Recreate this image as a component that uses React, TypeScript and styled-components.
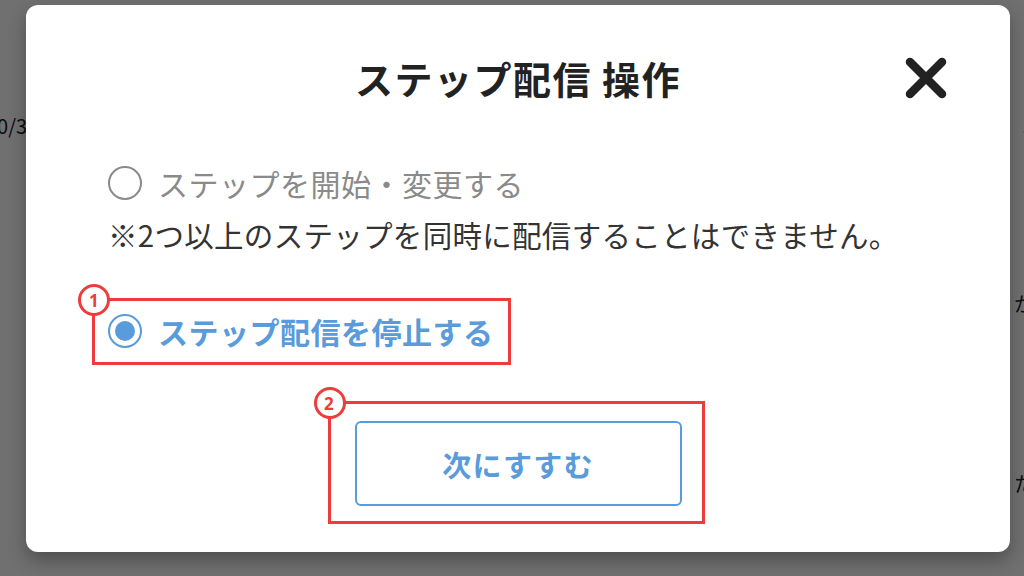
import React from "react";
import styled, { createGlobalStyle } from "styled-components";

const GlobalStyle = createGlobalStyle`
  html, body {
    margin: 0;
    padding: 0;
    width: 1024px;
    height: 576px;
    overflow: hidden;
    font-family: "Noto Sans CJK JP", "Noto Sans", sans-serif;
  }
`;

const Page = styled.div`
  position: relative;
  width: 1024px;
  height: 576px;
  background: #fff;
  display: flex;
  justify-content: space-between;
  overflow: hidden;
`;

const SideColumn = styled.div<{ align: "left" | "right" }>`
  display: flex;
  flex-direction: column;
  align-items: ${p => (p.align === "left" ? "flex-start" : "flex-end")};
  font-size: 20px;
  line-height: 28px;
  color: #222;
  padding-top: 112px;
  margin-left: ${p => (p.align === "left" ? "-14px" : "0")};
  margin-right: ${p => (p.align === "right" ? "-10px" : "0")};
`;

const SideText = styled.span<{ space?: number }>`
  margin-top: ${p => p.space ?? 0}px;
`;

const Overlay = styled.div`
  position: absolute;
  inset: 0;
  background: rgba(0, 0, 0, 0.56);
  display: flex;
  padding: 5px 14px 24px 26px;
  box-sizing: border-box;
`;

const Modal = styled.div`
  flex: 1;
  background: #fff;
  border-radius: 12px;
  box-shadow: 0 8px 18px rgba(0, 0, 0, 0.3);
  padding: 49px 62px 0 82px;
  display: flex;
  flex-direction: column;
`;

const Header = styled.div`
  display: grid;
  grid-template-columns: 1fr auto 1fr;
  align-items: center;
  height: 48px;
  margin-left: -20px;
`;

const Title = styled.h2`
  grid-column: 2;
  margin: 0;
  font-size: 38px;
  font-weight: 700;
  letter-spacing: 1.5px;
  color: #222;
  line-height: 48px;
`;

const CloseButton = styled.button`
  grid-column: 3;
  justify-self: end;
  width: 44px;
  height: 44px;
  padding: 0;
  border: none;
  background: none;
  display: flex;
  align-items: center;
  justify-content: center;
  cursor: pointer;
`;

const Option = styled.label<{ selected?: boolean; space: number }>`
  position: relative;
  display: inline-flex;
  align-self: flex-start;
  align-items: center;
  gap: 16px;
  height: 44px;
  margin-top: ${p => p.space}px;
  font-size: 30px;
  font-weight: ${p => (p.selected ? 700 : 400)};
  color: ${p => (p.selected ? "#5a9bdb" : "#8a8a8a")};
  letter-spacing: 0.5px;
`;

const Radio = styled.span<{ selected?: boolean }>`
  width: 34px;
  height: 34px;
  box-sizing: border-box;
  border-radius: 50%;
  border: 2px solid ${p => (p.selected ? "#5a9bdb" : "#8a8a8a")};
  display: flex;
  align-items: center;
  justify-content: center;
  flex-shrink: 0;

  &::after {
    content: "";
    display: ${p => (p.selected ? "block" : "none")};
    width: 20px;
    height: 20px;
    border-radius: 50%;
    background: #5a9bdb;
  }
`;

const Note = styled.p`
  margin: 7px 0 0;
  font-size: 29.5px;
  line-height: 44px;
  letter-spacing: 0.3px;
  color: #333;
`;

const Highlight = styled.span<{ t: number; r: number; b: number; l: number }>`
  position: absolute;
  top: ${p => p.t}px;
  right: ${p => p.r}px;
  bottom: ${p => p.b}px;
  left: ${p => p.l}px;
  border: 3px solid #ee3b3b;
  pointer-events: none;
`;

const Badge = styled.span`
  position: absolute;
  top: -17px;
  left: -17px;
  width: 32px;
  height: 32px;
  box-sizing: border-box;
  border-radius: 50%;
  border: 3px solid #ee3b3b;
  background: #fff;
  color: #ee3b3b;
  font-family: "Noto Sans", sans-serif;
  font-weight: 700;
  font-size: 17px;
  display: flex;
  align-items: center;
  justify-content: center;
  line-height: 1;
`;

const Footer = styled.div`
  display: flex;
  justify-content: center;
  margin-top: 68px;
  margin-left: -20px;
`;

const NextButton = styled.button`
  position: relative;
  width: 327px;
  height: 85px;
  border: 2px solid #5a9bdb;
  border-radius: 6px;
  background: #fff;
  color: #5a9bdb;
  font-family: "Noto Sans CJK JP", sans-serif;
  font-size: 29px;
  font-weight: 700;
  letter-spacing: 1.2px;
  cursor: pointer;
`;

export default function App() {
  return (
    <>
      <GlobalStyle />
      <Page>
        <SideColumn align="left">
          <SideText>10/3</SideText>
        </SideColumn>
        <SideColumn align="right">
          <SideText>5</SideText>
          <SideText space={150}>か</SideText>
          <SideText space={28}>/</SideText>
          <SideText space={96}>た</SideText>
        </SideColumn>
        <Overlay>
          <Modal>
            <Header>
              <Title>ステップ配信 操作</Title>
              <CloseButton aria-label="閉じる">
                <svg width="44" height="44" viewBox="0 0 44 44">
                  <path d="M6 6 L38 38 M38 6 L6 38" stroke="#222" strokeWidth="8.5" strokeLinecap="round" />
                </svg>
              </CloseButton>
            </Header>
            <Option space={59}>
              <Radio />
              ステップを開始・変更する
            </Option>
            <Note>※2つ以上のステップを同時に配信することはできません。</Note>
            <Option selected space={53}>
              <Radio selected />
              ステップ配信を停止する
              <Highlight t={-11} r={-17} b={-12} l={-16}>
                <Badge>1</Badge>
              </Highlight>
            </Option>
            <Footer>
              <NextButton>
                次にすすむ
                <Highlight t={-22} r={-25} b={-20} l={-29}>
                  <Badge>2</Badge>
                </Highlight>
              </NextButton>
            </Footer>
          </Modal>
        </Overlay>
      </Page>
    </>
  );
}
